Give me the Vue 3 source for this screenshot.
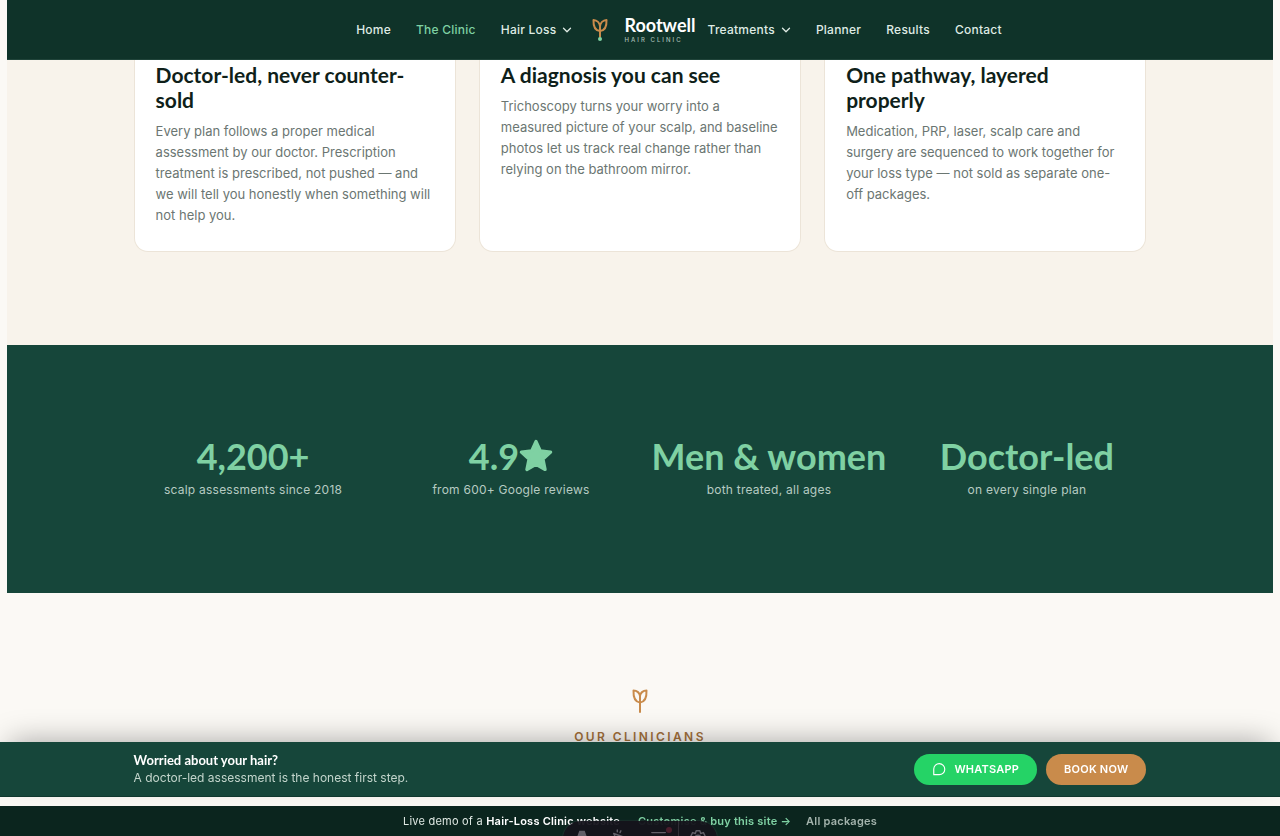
<script setup>
const navLeft = [
  { label: 'Home' },
  { label: 'The Clinic', active: true },
  { label: 'Hair Loss', menu: true },
]
const navRight = [
  { label: 'Treatments', menu: true },
  { label: 'Planner' },
  { label: 'Results' },
  { label: 'Contact' },
]
const cards = [
  {
    title: 'Doctor-led, never counter-sold',
    text: 'Every plan follows a proper medical assessment by our doctor. Prescription treatment is prescribed, not pushed — and we will tell you honestly when something will not help you.',
  },
  {
    title: 'A diagnosis you can see',
    text: 'Trichoscopy turns your worry into a measured picture of your scalp, and baseline photos let us track real change rather than relying on the bathroom mirror.',
  },
  {
    title: 'One pathway, layered properly',
    text: 'Medication, PRP, laser, scalp care and surgery are sequenced to work together for your loss type — not sold as separate one-off packages.',
  },
]
const stats = [
  { value: '4,200+', label: 'scalp assessments since 2018' },
  { value: '4.9', star: true, label: 'from 600+ Google reviews' },
  { value: 'Men & women', label: 'both treated, all ages' },
  { value: 'Doctor-led', label: 'on every single plan' },
]
</script>

<template>
  <div class="page">
    <header class="header">
      <nav class="nav" aria-label="Main">
        <a v-for="n in navLeft" :key="n.label" href="#" :class="{ active: n.active }">
          {{ n.label }}
          <svg v-if="n.menu" class="chev" viewBox="0 0 10 10"><path d="M1.500 3.200 5 6.700l3.500-3.500" /></svg>
        </a>
      </nav>
      <a class="brand" href="#">
        <svg class="brand-mark" viewBox="0 0 16 24">
          <path d="M8 19V8.500M8 13C3.500 12.600 1.200 8.800 1.500 2 5 2.300 7.700 4.800 8 8.200 8.300 4.800 11 2.300 14.500 2 14.800 8.800 12.500 12.600 8 13" />
          <circle cx="8" cy="21" r="2" />
        </svg>
        <span class="brand-text">
          <span class="brand-name">Rootwell</span>
          <span class="brand-sub">HAIR CLINIC</span>
        </span>
      </a>
      <nav class="nav" aria-label="More">
        <a v-for="n in navRight" :key="n.label" href="#">
          {{ n.label }}
          <svg v-if="n.menu" class="chev" viewBox="0 0 10 10"><path d="M1.500 3.200 5 6.700l3.500-3.500" /></svg>
        </a>
      </nav>
    </header>

    <main>
      <section class="why">
        <div class="wrap cards">
          <article v-for="c in cards" :key="c.title" class="card">
            <h3>{{ c.title }}</h3>
            <p>{{ c.text }}</p>
          </article>
        </div>
      </section>

      <section class="stats">
        <div class="wrap stats-grid">
          <div v-for="s in stats" :key="s.label" class="stat">
            <strong>{{ s.value }}<svg v-if="s.star" class="star" viewBox="0 0 32 32" role="img" aria-label="stars"><path d="M16 2.200 20.100 11.200 29.800 12.300 22.600 19 24.600 28.700 16 23.800 7.400 28.700 9.400 19 2.200 12.300 11.900 11.200Z" /></svg></strong>
            <span>{{ s.label }}</span>
          </div>
        </div>
      </section>

      <section class="team">
        <svg class="sprout" viewBox="0 0 16 24">
          <path d="M8 23V5.500M8 13.500C3.500 13 1.200 8.800 1.500 1.500 5 1.500 7.800 4 8 7 8.200 4 11 1.500 14.500 1.500 14.800 8.800 12.500 13 8 13.500" />
        </svg>
        <p class="eyebrow">OUR CLINICIANS</p>
      </section>
    </main>

    <div class="dock">
      <aside class="cta">
        <div class="wrap cta-row">
          <div class="cta-copy">
            <strong>Worried about your hair?</strong>
            <span>A doctor-led assessment is the honest first step.</span>
          </div>
          <div class="cta-actions">
            <a class="btn whatsapp" href="#">
              <svg viewBox="0 0 16 16"><path d="M2 14.500V8a6.300 6.300 0 1 1 6.300 6.500Z" /></svg>
              WHATSAPP
            </a>
            <a class="btn book" href="#">BOOK NOW</a>
          </div>
        </div>
      </aside>
      <div class="demo">
        <span>Live demo of a <b>Hair-Loss Clinic website</b></span>
        <a class="buy" href="#">Customise &amp; buy this site →</a>
        <a class="all" href="#">All packages</a>
      </div>
      <div class="tools">
        <button type="button" aria-label="Text">
          <svg viewBox="0 0 20 20"><path class="solid" d="M7 2h6l6 17h-5l-1-3H7l-1 3H1Z" /></svg>
        </button>
        <button type="button" aria-label="Select">
          <svg viewBox="0 0 20 20"><path d="M3 5l14 5-6 2-2 6ZM7 1v2M11 2l-1 2" /></svg>
        </button>
        <button type="button" aria-label="Layers">
          <svg viewBox="0 0 20 20"><path d="M2 4h15M4 10h11" /></svg>
          <i class="dot"></i>
        </button>
        <button type="button" class="split" aria-label="Settings">
          <svg viewBox="0 0 20 20"><circle cx="10" cy="10" r="3" /><path d="M8 2h4l1 3 3-1 2 4-2 2 2 3-2 4-3-1-1 3H8l-1-3-3 1-2-4 2-2-2-3 2-4 3 1Z" /></svg>
        </button>
      </div>
    </div>
  </div>
</template>

<style>
html,
body {
  background: #fbf9f5;
  overflow: hidden;
}
</style>

<style scoped>
.page {
  height: 100vh;
  overflow: hidden;
  padding: 0 7px;
  box-sizing: border-box;
  font-family: Inter, "Liberation Sans", sans-serif;
  font-size: 12px;
  color: #0f1f1a;
}
a {
  text-decoration: none;
  color: inherit;
}
svg {
  fill: none;
  stroke: currentColor;
  stroke-linecap: round;
  stroke-linejoin: round;
}
.wrap {
  width: 80%;
  margin: 0 auto;
}
.header {
  position: sticky;
  top: 0;
  z-index: 2;
  display: flex;
  justify-content: center;
  align-items: center;
  height: 60px;
  padding-left: 78px;
  box-sizing: border-box;
  background: #0f3329;
  border-bottom: 1px solid #20443a;
  color: #dfebe4;
}
.nav {
  display: flex;
  gap: 25px;
  font-weight: 500;
  letter-spacing: 0.02em;
}
.nav a {
  display: flex;
  align-items: center;
  gap: 6px;
  line-height: 20px;
}
.nav .active {
  color: #7fd1a3;
}
.chev {
  width: 10px;
  height: 10px;
  stroke-width: 1.3;
}
.brand {
  display: flex;
  align-items: center;
  gap: 16px;
  margin: 0 12px 0 20px;
}
.brand-mark {
  width: 16px;
  height: 24px;
  color: #c98b4b;
  stroke-width: 2;
}
.brand-mark circle {
  fill: #7fd1a3;
  stroke: none;
}
.brand-text {
  display: flex;
  flex-direction: column;
}
.brand-name {
  font: 700 18px/20px Lato, sans-serif;
  color: #fff;
}
.brand-sub {
  font-size: 6px;
  line-height: 10px;
  font-weight: 500;
  letter-spacing: 0.34em;
  color: #a9bfb5;
}
.why {
  background: #f8f3eb;
  padding-bottom: 93px;
}
.cards {
  display: grid;
  grid-template-columns: repeat(3, 1fr);
  gap: 23px;
}
.card {
  background: #fff;
  border: 1px solid #ece4d8;
  border-top: 0;
  border-radius: 0 0 14px 14px;
  padding: 2px 21px 25px;
}
.card h3 {
  margin: 0 0 9px;
  font: 700 21px/25px Lato, sans-serif;
}
.card p {
  margin: 0;
  font-size: 13px;
  line-height: 21px;
  color: #6b7672;
}
.stats {
  background: #16463a;
  padding: 89px 0 93px;
}
.stats-grid {
  display: grid;
  grid-template-columns: repeat(4, 1fr);
  gap: 19px;
}
.stat {
  display: flex;
  flex-direction: column;
  align-items: center;
  white-space: nowrap;
}
.stat strong {
  display: flex;
  align-items: center;
  font: 700 36px/44px Lato, sans-serif;
  color: #7fd1a3;
}
.star {
  width: 34px;
  height: 34px;
  stroke-width: 3;
  fill: currentColor;
}
.stat span {
  margin-top: 2px;
  line-height: 20px;
  letter-spacing: 0.02em;
  color: #b6cbc2;
}
.team {
  display: flex;
  flex-direction: column;
  align-items: center;
  padding-top: 96px;
  background: #fbf9f5;
}
.sprout {
  width: 16px;
  height: 24px;
  color: #c98b4b;
  stroke-width: 2;
}
.eyebrow {
  margin: 16px 0 120px;
  line-height: 16px;
  font-weight: 600;
  letter-spacing: 0.2em;
  color: #a3703b;
}
.dock {
  position: fixed;
  left: 0;
  right: 0;
  bottom: 0;
  z-index: 3;
  display: flex;
  flex-direction: column;
  gap: 9px;
}
.cta {
  padding: 0 7px;
  background: #16463a;
  border-bottom: 1px solid #10382e;
  box-shadow: 0 -10px 30px -10px rgba(0, 0, 0, 0.35);
}
.cta-row {
  display: flex;
  justify-content: space-between;
  align-items: center;
  height: 54px;
}
.cta-copy {
  display: flex;
  flex-direction: column;
  line-height: 18px;
  color: #c3d5cc;
}
.cta-copy strong {
  font-family: Lato, sans-serif;
  font-size: 13px;
  color: #fff;
}
.cta-actions {
  display: flex;
  gap: 9px;
}
.btn {
  display: flex;
  align-items: center;
  gap: 8px;
  height: 31px;
  padding: 0 18px;
  border-radius: 16px;
  font-size: 11px;
  font-weight: 600;
  letter-spacing: 0.02em;
  color: #fff;
}
.btn svg {
  width: 14px;
  height: 14px;
  stroke-width: 1.3;
}
.whatsapp {
  background: #25d366;
}
.book {
  background: #c98b4b;
}
.demo {
  display: flex;
  justify-content: center;
  align-items: center;
  height: 30px;
  font-size: 11px;
  letter-spacing: 0.02em;
  background: #0b251e;
  color: #dfe8e3;
}
.demo b {
  font-weight: 600;
  color: #fff;
}
.buy {
  margin: 0 15px 0 18px;
  font-weight: 600;
  color: #7fd1a3;
}
.all {
  font-weight: 600;
  color: #a3b3ac;
}
.tools {
  position: absolute;
  left: 50%;
  bottom: -21px;
  display: flex;
  width: 154px;
  height: 36px;
  margin-left: -77px;
  border-radius: 18px;
  background: rgba(21, 19, 27, 0.95);
  box-shadow: 0 0 2px rgba(90, 90, 100, 0.6);
  color: #625f68;
}
.tools button {
  position: relative;
  display: flex;
  flex: 1;
  align-items: flex-start;
  justify-content: center;
  padding: 8px 0 0;
  border: 0;
  background: none;
  color: inherit;
}
.tools .split {
  border-left: 1px solid #302e36;
}
.tools svg {
  width: 18px;
  height: 18px;
  stroke-width: 1.6;
}
.tools .solid {
  fill: currentColor;
  stroke: none;
}
.dot {
  position: absolute;
  top: 6px;
  right: 6px;
  width: 6px;
  height: 6px;
  border-radius: 50%;
  background: #4a1d2c;
}
</style>
